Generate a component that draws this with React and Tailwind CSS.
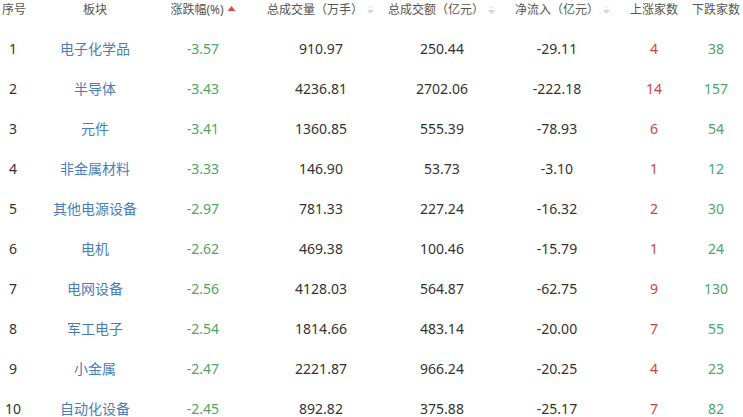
import React from 'react';

const rows = [
  [1, '电子化学品', '-3.57', '910.97', '250.44', '-29.11', 4, 38],
  [2, '半导体', '-3.43', '4236.81', '2702.06', '-222.18', 14, 157],
  [3, '元件', '-3.41', '1360.85', '555.39', '-78.93', 6, 54],
  [4, '非金属材料', '-3.33', '146.90', '53.73', '-3.10', 1, 12],
  [5, '其他电源设备', '-2.97', '781.33', '227.24', '-16.32', 2, 30],
  [6, '电机', '-2.62', '469.38', '100.46', '-15.79', 1, 24],
  [7, '电网设备', '-2.56', '4128.03', '564.87', '-62.75', 9, 130],
  [8, '军工电子', '-2.54', '1814.66', '483.14', '-20.00', 7, 55],
  [9, '小金属', '-2.47', '2221.87', '966.24', '-20.25', 4, 23],
  [10, '自动化设备', '-2.45', '892.82', '375.88', '-25.17', 7, 82],
];

const grid = 'grid grid-cols-[26px_138px_78px_158px_84px_146px_48px_1fr] items-center';

const SortIcon = ({ active }) => (
  <svg width="9" height="10" viewBox="0 0 9 10" className="ml-[3px] shrink-0">
    {active ? (
      <polygon points="4.5,1 8.5,6 0.5,6" fill="#e0474c" />
    ) : (
      <>
        <polygon points="4.5,0 8,3.5 1,3.5" fill="#f2f2f2" />
        <polygon points="1,5 8,5 4.5,9" fill="#d4d4d4" />
      </>
    )}
  </svg>
);

const Head = ({ children, sort, active, className = '' }) => (
  <div className={`flex items-center justify-center whitespace-nowrap ${className}`}>
    <span>{children}</span>
    {sort && <SortIcon active={active} />}
  </div>
);

export default function App() {
  return (
    <div
      className="w-[743px] h-[417px] bg-white overflow-hidden text-[#333]"
      style={{ fontFamily: '"Noto Sans", "Noto Sans CJK SC", sans-serif' }}
    >
      <div className={`${grid} h-[19px] text-[12px] text-[#555]`}>
        <div className="text-center pl-[2px] whitespace-nowrap">序号</div>
        <Head>板块</Head>
        <Head sort active>涨跌幅(%)</Head>
        <Head sort>总成交量（万手）</Head>
        <Head sort>总成交额（亿元）</Head>
        <Head sort className="pl-[12px]">净流入（亿元）</Head>
        <Head>上涨家数</Head>
        <div className="flex justify-end pr-[3px] whitespace-nowrap">
          <span className="w-[48px] text-center">下跌家数</span>
        </div>
      </div>
      <div className="pt-[9px]">
        {rows.map(r => (
          <div key={r[0]} className={`${grid} h-[40px] text-[14px]`}>
            <div className="text-center">{r[0]}</div>
            <div className="text-center text-[#4a7db8]">{r[1]}</div>
            <div className="text-center text-[#4fa468]">{r[2]}</div>
            <div className="text-center">{r[3]}</div>
            <div className="text-center">{r[4]}</div>
            <div className="text-center">{r[5]}</div>
            <div className="text-center text-[#d0433f]">{r[6]}</div>
            <div className="flex justify-end pr-[3px]">
              <span className="w-[48px] text-center text-[#4fa468]">{r[7]}</span>
            </div>
          </div>
        ))}
      </div>
    </div>
  );
}
